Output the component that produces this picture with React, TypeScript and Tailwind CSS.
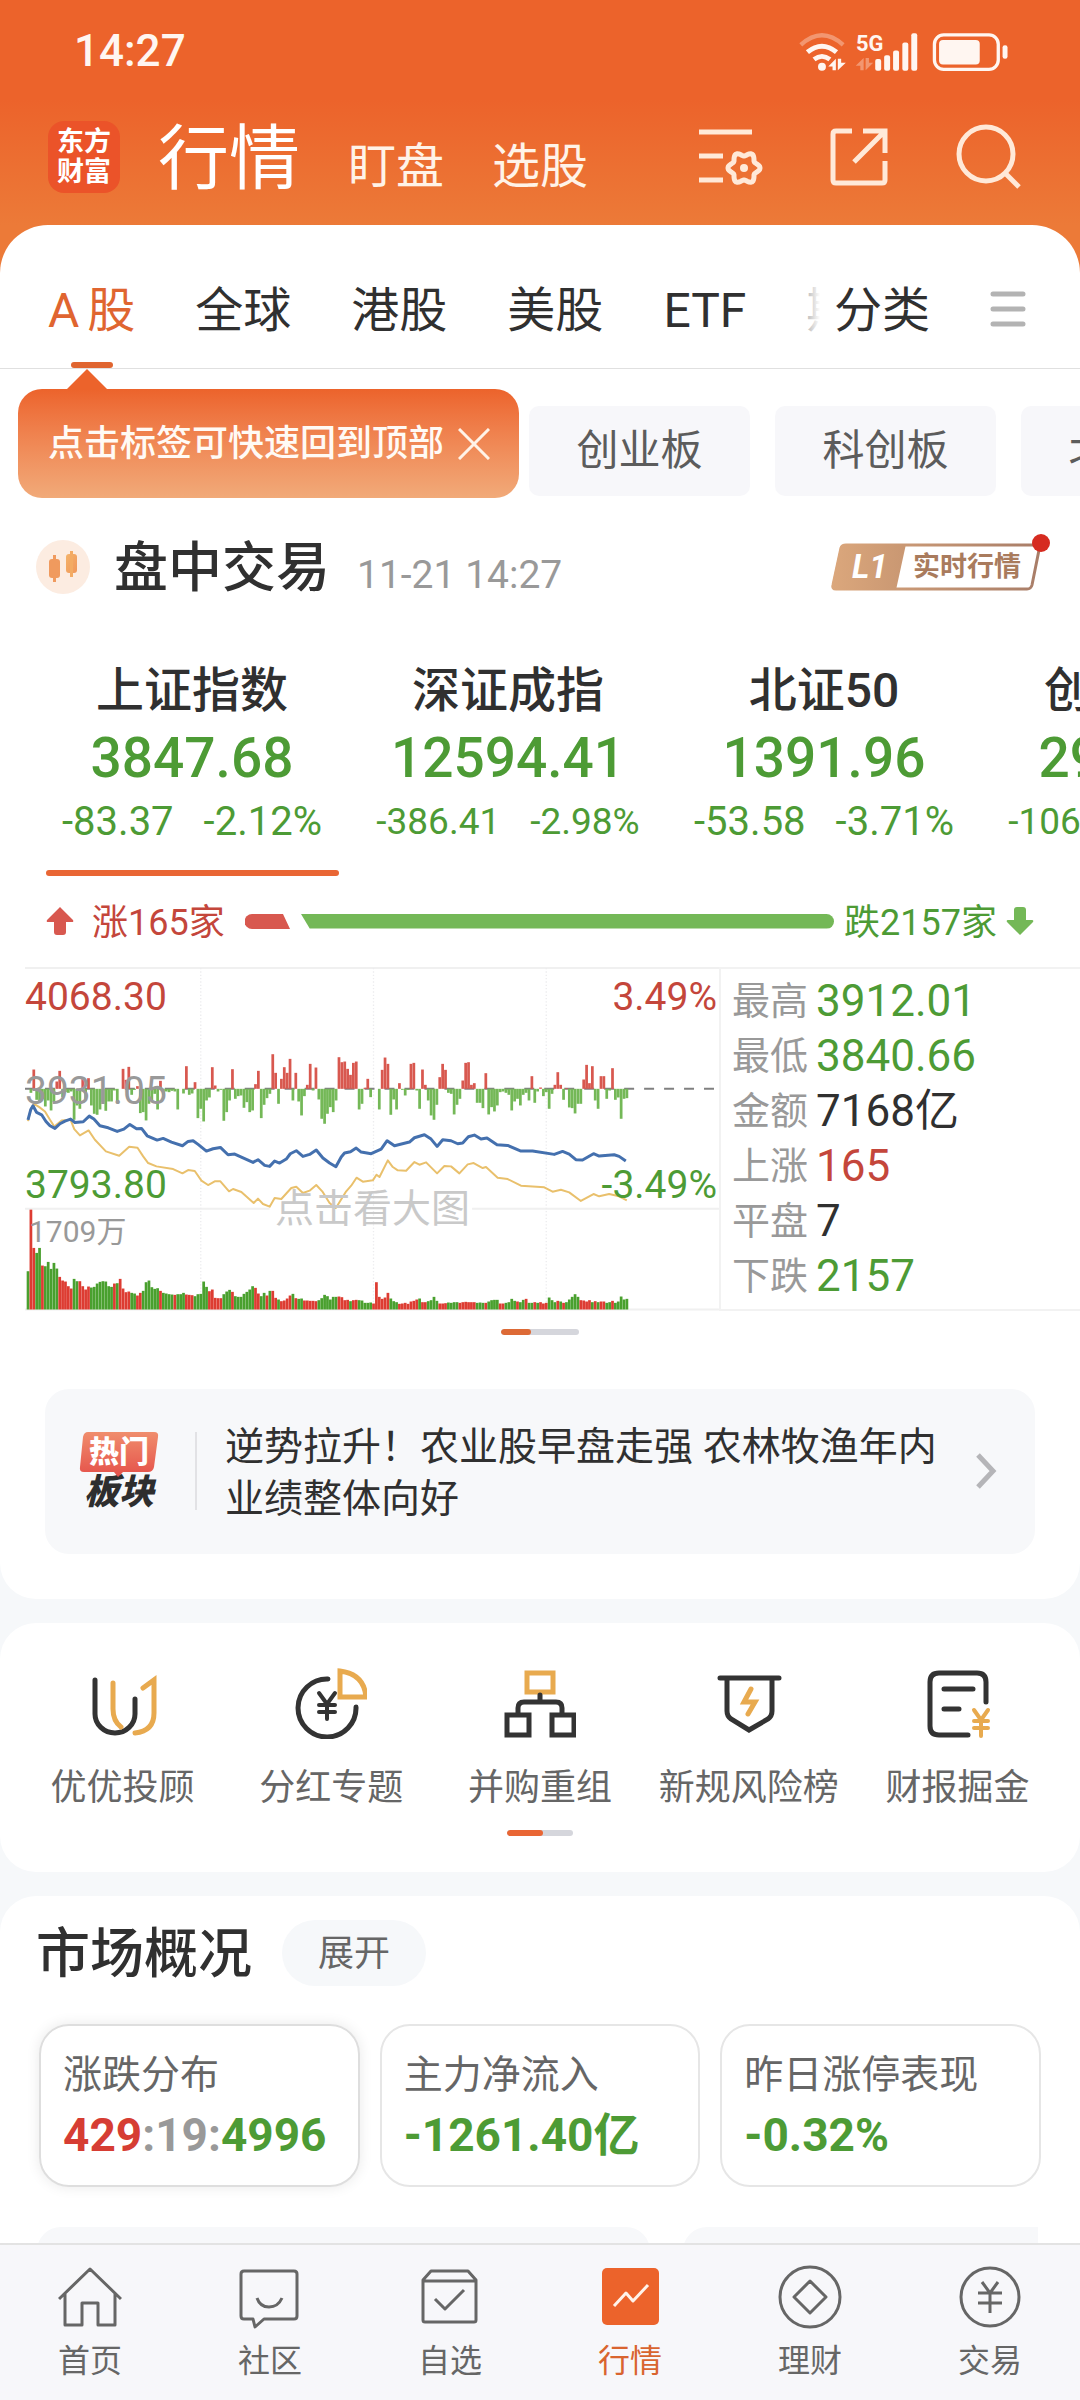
const GREEN = "#74b857";
const RED = "#d8584f";

/* One value per minute: positive draws above the base line, negative below. */
const momentum = [
  0, -12, 58, -33, -40, -30, -53, -35, -65, -40, 22, 54, -25, -10, -12, -8, -93, -50, -60, 33, -30, 32, -50, -75, -78,
  -62, -40, -66, -38, -38, -5, -37, 0, 60, 27, 66, -18, -3, 8, -73, -70, -95, -45, -35, -15, -62, 24, -18, -8, -10, -6,
  -8, -62, 0, -14, 68, -18, -14, 20, -88, -60, -98, -35, -26, 65, 10, -8, -3, -96, -70, -35, 59, -30, -22, -20, -57,
  -40, -70, -65, 14, 54, -88, -48, -28, -15, 104, 48, -45, 30, 65, 48, 90, -35, 48, -38, -80, -22, 12, 75, -5, 64, -32,
  -90, -105, -75, -55, -70, -35, 95, 80, 82, 60, 42, 78, 82, -62, -45, 3, 30, -25, 0, 0, -62, 57, 94, 75, -78, -32,
  -62, 17, -3, -20, -3, 75, 78, -5, -60, 58, 12, -35, -80, -93, -48, 35, 75, 57, -12, -15, -77, -48, -30, 25, 78, 80,
  12, 17, -42, -42, -58, 47, -77, -55, -68, -50, -10, -8, -12, -18, -65, -38, -30, -50, -18, -12, -35, 38, -42, -8, 4,
  -22, -10, -60, -15, 12, 50, 12, -33, 2, -56, -58, -74, -45, -45, 28, 72, 17, 68, -35, -60, 38, 38, -30, -5, 62, -33,
  -26, -90, -30, -28,
];

/* Volume per minute: positive is a rising minute, negative a falling one. */
const volume = [
  -115, 300, 185, -170, -185, 132, -130, -143, -122, -140, -123, 98, 87, 84, 70, 63, -92, -85, 85, 70, 60, 69, -66, -68,
  -78, -83, -85, -84, -70, -68, 78, -79, 92, 63, 52, 54, -50, -48, 42, 50, -56, -82, -87, -67, -62, -64, 56, -50, -48,
  -46, -45, 44, -46, -46, -50, 45, 44, 43, -40, -46, -47, -84, -68, 55, 60, 35, 34, 34, -46, -54, -59, 53, -40, -38,
  -38, -47, -53, -60, -70, 65, 48, -40, -50, 42, -56, 56, 35, -30, 25, 27, 33, 42, -47, 34, -32, -33, 27, 27, 26, 26,
  25, -28, -34, -44, -40, -30, -38, -38, 39, 37, 28, 29, -25, 28, 29, -28, -27, -20, -20, -21, 18, 82, 38, 32, 36, 50,
  -33, -25, -22, 17, 18, 20, 17, 24, 26, 30, -33, 22, 22, -25, -28, -38, -26, 18, 18, 19, -21, -20, -22, -22, 20, 22,
  23, 22, 22, 22, -20, -21, -20, 20, -24, -28, -29, -29, 18, 18, -20, -22, -32, -26, 24, -22, -29, 32, -20, -20, 22,
  -20, 22, 18, 20, -36, -28, -22, 26, -24, 20, -22, -30, -38, -46, -38, 28, 27, 24, 28, -22, 25, -22, 24, 24, -20, -22,
  26, -20, -24, -39, -30, -32,
];

const indexLine =
  "24,210 32,180 39,168 50,188 65,195 78,215 90,228 105,236 120,222 135,214 152,208 165,218 190,216 208,199 222,208 240,228 265,234 292,245 312,238 330,224 350,237 365,236 382,258 412,271 430,266 455,277 488,288 505,275 520,273 535,284 560,304 580,297 602,293 625,315 645,313 700,338 715,330 735,347 750,350 765,334 780,340 800,328 812,312 830,303 850,320 870,314 890,301 910,325 930,340 949,351 965,322 975,310 993,306 1010,295 1025,307 1055,312 1085,298 1103,273 1125,288 1170,277 1185,264 1215,255 1235,268 1253,290 1270,270 1295,273 1315,282 1330,280 1347,261 1365,256 1385,268 1403,265 1433,285 1465,287 1505,304 1540,304 1605,314 1630,305 1650,313 1670,330 1690,331 1723,312 1740,319 1785,315 1800,320 1820,334";

const averageLine =
  "24,214 32,180 42,162 58,172 75,185 90,210 103,230 125,212 152,210 163,238 180,257 206,242 225,270 258,305 298,318 328,291 353,294 370,320 385,340 410,350 460,358 488,371 505,361 525,364 545,393 565,406 585,395 602,395 628,425 640,418 665,427 702,460 715,447 730,463 750,471 765,445 785,448 815,415 830,411 850,430 870,423 890,406 908,425 930,460 949,475 980,425 995,408 1011,384 1030,396 1060,392 1071,375 1080,382 1105,332 1120,352 1135,362 1160,363 1185,337 1200,345 1220,338 1235,353 1253,371 1275,349 1295,350 1320,371 1345,344 1363,340 1390,355 1400,352 1435,384 1465,388 1505,408 1575,413 1600,426 1625,420 1650,428 1685,454 1723,433 1740,440 1770,433 1800,440 1823,452";

const STEP = 8.65;

function gearPath(cx: number, cy: number) {
  const points: string[] = [];
  for (let deg = 0; deg < 360; deg += 5) {
    const t = (deg * Math.PI) / 180;
    const r = 14 + 2 * Math.cos(6 * t);
    points.push(`${(cx + r * Math.cos(t)).toFixed(1)} ${(cy + r * Math.sin(t)).toFixed(1)}`);
  }
  return `M${points.join("L")}Z`;
}

function StatusIcons() {
  return (
    <svg viewBox="50 25 645 130" className="h-[43px] w-[215px]" fill="none" stroke="#fff6f1" aria-hidden="true">
      <path d="M62 70Q126 12 190 70" strokeWidth="13" opacity="0.35" />
      <path d="M82 92Q126 56 170 92" strokeWidth="15" />
      <path d="M102 114Q126 95 150 114" strokeWidth="14" />
      <g fill="#fff6f1" stroke="none">
        <circle cx="126" cy="136" r="12" />
        <path d="M168 112V147H158V135H145Z" />
        <path d="M174 147V112H184V124H198Z" />
        <g opacity="0.35">
          <path d="M252 110V147H242V133H228Z" />
          <path d="M258 147V110H268V124H281Z" />
        </g>
        <text x="229" y="90" fontSize="66" fontWeight="700">5G</text>
        <rect x="287" y="113" width="18" height="35" rx="6" />
        <rect x="314" y="101" width="18" height="47" rx="6" />
        <rect x="341" y="87" width="18" height="61" rx="6" />
        <rect x="369" y="63" width="18" height="85" rx="6" />
        <rect x="396" y="35" width="18" height="113" rx="6" />
        <rect x="480" y="55" width="123" height="74" rx="12" />
        <rect x="672" y="71" width="15" height="41" rx="7" />
      </g>
      <rect x="466" y="40" width="193" height="104" rx="28" strokeWidth="10" />
    </svg>
  );
}

function Header() {
  return (
    <header>
      <div className="flex h-[102px] items-center justify-between pr-[69px] pl-[74px]">
        <time className="text-[44px] leading-none font-medium text-[#fff6f1]">14:27</time>
        <StatusIcons />
      </div>
      <div className="mb-[13px] flex h-[110px] items-center pr-[58px] pl-[48px]">
        <div className="flex h-[72px] w-[72px] flex-col items-center justify-center rounded-[16px] bg-[#eb5329] text-[27px] leading-[30px] font-bold text-white">
          <span>东方</span>
          <span>财富</span>
        </div>
        <nav className="ml-[38px] flex items-baseline gap-[48px] pt-[12px] text-[48px] leading-[80px] text-[#fff3e8]">
          <a href="#quotes" className="text-[71px] text-white">行情</a>
          <a href="#watch">盯盘</a>
          <a href="#pick">选股</a>
        </nav>
        <div className="ml-auto flex gap-[63px]">
          <button type="button" aria-label="设置">
            <svg viewBox="0 0 66 66" className="h-[66px] w-[66px]" fill="none" stroke="#ffe9d8" strokeWidth="5">
              <path d="M1 8H54M1 32H25M1 56H25" />
              <path d={gearPath(46, 44)} strokeWidth="5" strokeLinejoin="round" />
              <circle cx="46" cy="44" r="4" fill="#ffe9d8" stroke="none" />
            </svg>
          </button>
          <button type="button" aria-label="分享">
            <svg viewBox="0 0 66 66" className="h-[66px] w-[66px]" fill="none" stroke="#ffe9d8" strokeWidth="5">
              <path d="M25 7H9Q6 7 6 10V56Q6 59 9 59H55Q58 59 58 56V37M36 7H58V29M58 7L27 38" />
            </svg>
          </button>
          <button type="button" aria-label="搜索">
            <svg viewBox="0 0 66 66" className="h-[66px] w-[66px]" fill="none" stroke="#ffe9d8" strokeWidth="5">
              <circle cx="30" cy="30" r="27" />
              <path d="M48 48L63 63" />
            </svg>
          </button>
        </div>
      </div>
    </header>
  );
}

function MarketTabs() {
  return (
    <div className="flex h-[144px] items-stretch border-b border-[#e0e0e0] pr-[54px] pl-[48px] text-[48px] leading-[60px] text-[#303030]">
      <div className="relative flex min-w-0 flex-1 gap-[60px] overflow-hidden whitespace-nowrap">
        <button type="button" className="relative flex shrink-0 items-center gap-[8px] pt-[28px] text-[#e06530]">
          <span>A</span>
          <span>股</span>
          <span className="absolute bottom-0 left-1/2 h-[6px] w-[42px] -translate-x-1/2 rounded-[3px] bg-[#e06530]" />
        </button>
        <button type="button" className="shrink-0 pt-[28px]">全球</button>
        <button type="button" className="shrink-0 pt-[28px]">港股</button>
        <button type="button" className="shrink-0 pt-[28px]">美股</button>
        <button type="button" className="shrink-0 pt-[28px]">ETF</button>
        <button type="button" className="shrink-0 pt-[28px]">期货</button>
        <span className="absolute inset-y-0 right-0 w-[40px] bg-linear-to-r from-white/0 to-white" />
      </div>
      <button type="button" className="ml-[14px] shrink-0 pt-[28px]">分类</button>
      <button type="button" aria-label="更多" className="ml-[60px] pt-[24px]">
        <svg viewBox="0 0 36 36" className="h-[36px] w-[36px]" stroke="#b3b3b3" strokeWidth="5" strokeLinecap="round">
          <path d="M3 3H33M3 18H33M3 33H33" />
        </svg>
      </button>
    </div>
  );
}

function BoardChips() {
  return (
    <div className="relative">
      <div className="flex gap-[25px] overflow-hidden pt-[37px] pl-[529px] text-[42px] leading-[90px] text-[#5c5c5c]">
        {["创业板", "科创板", "北交所"].map((name) => (
          <button key={name} type="button" className="h-[90px] w-[221px] shrink-0 rounded-[10px] bg-[#f7f7fa]">
            {name}
          </button>
        ))}
      </div>
      <div className="absolute top-[20px] left-[18px] flex h-[109px] w-[501px] items-center justify-between rounded-[24px] bg-linear-to-b from-[#ec632b] to-[#f1aa79] pr-[29px] pl-[30px] text-[36px] font-medium text-[#fffaf5]">
        <svg viewBox="0 0 42 21" className="absolute -top-[20px] left-[48px] h-[21px] w-[42px]" fill="#ec632b" aria-hidden="true">
          <path d="M21 0L42 21H0Z" />
        </svg>
        <span>点击标签可快速回到顶部</span>
        <button type="button" aria-label="关闭">
          <svg viewBox="0 0 32 32" className="h-[32px] w-[32px]" stroke="#fff3e8" strokeWidth="3">
            <path d="M1 1L31 31M31 1L1 31" />
          </svg>
        </button>
      </div>
    </div>
  );
}

function TradingState() {
  return (
    <div className="mt-[44px] flex h-[54px] items-center pr-[37px] pl-[36px]">
      <svg viewBox="0 0 54 54" className="h-[54px] w-[54px] shrink-0" aria-hidden="true">
        <defs>
          <linearGradient id="candle" x1="0" y1="0" x2="1" y2="1">
            <stop offset="0" stopColor="#f4b36a" />
            <stop offset="1" stopColor="#f0975a" />
          </linearGradient>
        </defs>
        <circle cx="27" cy="27" r="27" fill="#fcece1" />
        <rect x="13" y="19" width="11" height="19" rx="3" fill="#f09a5e" />
        <rect x="17" y="15" width="3" height="27" fill="#f09a5e" />
        <rect x="30" y="14" width="11" height="19" rx="3" fill="url(#candle)" />
        <rect x="34" y="11" width="3" height="26" fill="#f3ab63" />
      </svg>
      <h2 className="ml-[24px] pt-[4px] text-[54px] leading-[60px] font-medium text-[#303030]">盘中交易</h2>
      <time className="ml-[27px] pt-[16px] text-[39px] leading-[46px] text-[#999]">11-21 14:27</time>
      <button type="button" className="relative ml-auto h-[48px] w-[212px]">
        <svg viewBox="0 0 212 48" className="absolute inset-0 h-full w-full" aria-hidden="true">
          <defs>
            <linearGradient id="tan" x1="0" y1="0" x2="1" y2="0">
              <stop offset="0" stopColor="#dba77c" />
              <stop offset="1" stopColor="#c99772" />
            </linearGradient>
            <linearGradient id="rim" x1="0" y1="0" x2="1" y2="0">
              <stop offset="0" stopColor="#dba77c" />
              <stop offset="1" stopColor="#a87d68" />
            </linearGradient>
          </defs>
          <path d="M15 2H209L201 42Q200 46 196 46H5Q1 46 2 42L10 5Q11 2 15 2Z" fill="#fff" stroke="url(#rim)" strokeWidth="3" />
          <path d="M15 1H75L65 47H5Q0 47 1 42L9 5Q10 1 15 1Z" fill="url(#tan)" />
        </svg>
        <span className="relative flex h-full items-center pl-[21px] whitespace-nowrap">
          <b className="text-[33px] italic text-white">L1</b>
          <span className="absolute left-[82px] text-[27px] font-bold text-[#a97b5d]">实时行情</span>
        </span>
        <span className="absolute -top-[9px] right-[-7px] h-[18px] w-[18px] rounded-full bg-[#d62b20]" />
      </button>
    </div>
  );
}

const indices = [
  { name: "上证指数", value: "3847.68", diff: "-83.37", pct: "-2.12%", small: false },
  { name: "深证成指", value: "12594.41", diff: "-386.41", pct: "-2.98%", small: true },
  { name: "北证50", value: "1391.96", diff: "-53.58", pct: "-3.71%", small: false },
  { name: "创业板指", value: "2920.08", diff: "-106.23", pct: "-3.51%", small: true },
];

function IndexStrip() {
  return (
    <div className="mt-[67px] flex overflow-hidden pl-[34px]">
      {indices.map((item, i) => (
        <button key={item.name} type="button" className="flex w-[316px] shrink-0 flex-col items-center text-[#4d9b35]">
          <span className="text-[48px] leading-[60px] font-medium text-[#303030]">{item.name}</span>
          <span className="text-[55px] leading-[74px] font-medium">{item.value}</span>
          <span
            className={
              item.small
                ? "flex gap-[30px] text-[37px] leading-[54px]"
                : "flex gap-[30px] text-[40px] leading-[54px]"
            }
          >
            <span>{item.diff}</span>
            <span>{item.pct}</span>
          </span>
          {i === 0 && <span className="mt-[21px] h-[6px] w-[293px] rounded-[3px] bg-[#e96634]" />}
        </button>
      ))}
    </div>
  );
}

function Breadth() {
  return (
    <div className="mt-[21px] flex h-[48px] items-center pr-[46px] pl-[46px] text-[36px] whitespace-nowrap">
      <svg viewBox="0 0 28 28" className="h-[28px] w-[28px] shrink-0" fill={RED} aria-hidden="true">
        <path d="M14 0L27 13Q28 15 26 15H20V25Q20 28 17 28H11Q8 28 8 25V15H2Q0 15 1 13Z" />
      </svg>
      <span className="ml-[18px] pt-[3px] text-[#c4463b]">涨165家</span>
      <svg viewBox="0 0 56 15" className="ml-[20px] h-[15px] w-[56px] shrink-0" aria-hidden="true">
        <path d="M7 0H38L45 15H7A7 7 0 0 1 7 0Z" fill={RED} />
      </svg>
      <span className="h-[15px] flex-1 rounded-r-full bg-[#74b857] [clip-path:polygon(0_0,100%_0,100%_100%,9px_100%)]" />
      <span className="ml-[10px] pt-[3px] text-[#4d9b35]">跌2157家</span>
      <svg viewBox="0 0 28 28" className="ml-[9px] h-[28px] w-[28px] shrink-0" fill={GREEN} aria-hidden="true">
        <path d="M14 28L27 15Q28 13 26 13H20V3Q20 0 17 0H11Q8 0 8 3V13H2Q0 13 1 15Z" />
      </svg>
    </div>
  );
}

function MinuteChart() {
  return (
    <svg viewBox="15 -249 2085 1032" className="block h-auto w-full" fill="none" role="img" aria-label="分时走势">
      <path d="M15 -246H2100M15 780H2100M15 477H750M1358 477H2100" stroke="#f0f0f0" strokeWidth="6" />
      <path d="M543 -246V780M1062 -246V780M1581 -246V780" stroke="#ececee" strokeWidth="4" strokeDasharray="4 6" />
      <path d="M15 117H2100" stroke="#808080" strokeWidth="6" strokeDasharray="30 30" />
      {momentum.map((v, i) => (
        <rect
          key={i}
          x={20 + STEP * i}
          y={v > 0 ? 117 - v : 117}
          width="8.2"
          height={Math.abs(v)}
          fill={v > 0 ? RED : GREEN}
        />
      ))}
      {volume.map((v, i) => (
        <rect
          key={i}
          x={20 + STEP * i}
          y={780 - Math.abs(v)}
          width="8.2"
          height={Math.abs(v)}
          fill={v > 0 ? "#dd3c32" : "#49a02e"}
        />
      ))}
      <polyline points={averageLine} stroke="#e9c06c" strokeWidth="6" strokeLinejoin="round" />
      <polyline points={indexLine} stroke="#4470ae" strokeWidth="9" strokeLinejoin="round" />
    </svg>
  );
}

const stats = [
  ["最高", "3912.01", "text-[#4d9b35]"],
  ["最低", "3840.66", "text-[#4d9b35]"],
  ["金额", "7168亿", "text-[#303030]"],
  ["上涨", "165", "text-[#c4463b]"],
  ["平盘", "7", "text-[#303030]"],
  ["下跌", "2157", "text-[#4d9b35]"],
];

function ChartPanel() {
  return (
    <>
      <div className="mt-[22px] flex pl-[25px]">
        <div className="relative flex-1 text-[39px] leading-[48px]">
          <MinuteChart />
          <span className="absolute top-[6px] left-0 text-[#c4463b]">4068.30</span>
          <span className="absolute top-[6px] right-[2px] text-[#c4463b]">3.49%</span>
          <span className="absolute top-[100px] left-0 text-[#999]">3931.05</span>
          <span className="absolute top-[194px] left-0 text-[#4d9b35]">3793.80</span>
          <span className="absolute top-[194px] right-[2px] text-[#4d9b35]">-3.49%</span>
          <span className="absolute top-[241px] left-[4px] text-[30px] text-[#999]">1709万</span>
          <span className="absolute top-[218px] left-[250px] text-[39px] text-[#c9c9c9]">点击看大图</span>
        </div>
        <dl className="w-[361px] border-y-2 border-l-2 border-[#f2f2f2] pt-[5px] pl-[11px] leading-[55px]">
          {stats.map(([label, value, tone]) => (
            <div key={label} className="flex items-center gap-[8px]">
              <dt className="text-[38px] text-[#999]">{label}</dt>
              <dd className={`text-[44px] ${tone}`}>{value}</dd>
            </div>
          ))}
        </dl>
      </div>
      <div className="mx-auto mt-[18px] h-[6px] w-[78px] overflow-hidden rounded-[3px] bg-[#d5d6dc]">
        <div className="h-full w-[30px] rounded-[3px] bg-[#dd6a36]" />
      </div>
    </>
  );
}

function HotSector() {
  return (
    <a href="#hot" className="mx-[45px] mt-[54px] flex h-[165px] items-center rounded-[24px] bg-[#f7f8fa] pr-[38px] pl-[34px]">
      <span className="relative flex w-[80px] flex-col items-center leading-none font-black">
        <svg viewBox="0 0 80 46" className="absolute top-0 left-0 h-[46px] w-[80px]" aria-hidden="true">
          <defs>
            <linearGradient id="hot" x1="0" y1="0" x2="0" y2="1">
              <stop offset="0" stopColor="#f08d6c" />
              <stop offset="1" stopColor="#e5514a" />
            </linearGradient>
          </defs>
          <path d="M9 0H75Q80 0 79 5L75 35Q74 40 69 40H44L39 45L35 40H5Q0 40 1 35L4 5Q5 0 9 0Z" fill="url(#hot)" />
        </svg>
        <span className="relative text-[30px] leading-[40px] text-white">热门</span>
        <span className="pt-[3px] text-[35px] leading-[36px] text-[#2e2e2e] italic">板块</span>
      </span>
      <span className="ml-[36px] h-[78px] w-[2px] bg-[#e2e2e5]" />
      <span className="ml-[28px] flex-1 pt-[3px] text-[39px] leading-[52px] text-[#303030]">
        逆势拉升！农业股早盘走强 农林牧渔年内业绩整体向好
      </span>
      <svg viewBox="0 0 22 36" className="ml-[30px] h-[36px] w-[22px] shrink-0" fill="none" stroke="#b5b5b8" strokeWidth="5" aria-hidden="true">
        <path d="M3 2L18 18L3 34" />
      </svg>
    </a>
  );
}

const AMBER = "#e8aa4f";

const shortcuts = [
  {
    label: "优优投顾",
    icon: (
      <>
        <path d="M9 13V47A20 19 0 0 0 49 47V32" />
        <path d="M27 16V42Q27 54 35 60M57 21L68 13V46Q68 64 49 66" stroke={AMBER} />
      </>
    ),
  },
  {
    label: "分红专题",
    icon: (
      <>
        <path d="M33 12A29 29 0 1 0 61 40" />
        <path d="M24 26L32 37L40 26M32 37V52M24 38H40M24 45H40" strokeWidth="4" />
        <path d="M45 4V30H71Q69 7 45 4Z" stroke={AMBER} />
      </>
    ),
  },
  {
    label: "并购重组",
    icon: (
      <>
        <path d="M23 6H49V25H23Z" stroke={AMBER} />
        <path d="M36 28V35M14 46V41Q14 35 20 35H52Q58 35 58 41V46M3 48H25V68H3ZM48 48H70V68H48Z" />
      </>
    ),
  },
  {
    label: "新规风险榜",
    icon: (
      <>
        <path d="M7 11H66M14 12V44Q14 49 18 52L36 63L55 52Q59 49 59 44V12" />
        <path d="M38 22L31 35H42L35 47" stroke={AMBER} />
      </>
    ),
  },
  {
    label: "财报掘金",
    icon: (
      <>
        <path d="M64 35V15Q64 6 55 6H17Q8 6 8 15V59Q8 68 17 68H46M22 22H51M22 42H37" />
        <path d="M52 43L59 53L66 43M59 53V69M52 54H66M52 61H66" stroke={AMBER} strokeWidth="4" />
      </>
    ),
  },
];

function Shortcuts() {
  return (
    <section className="mt-[24px] rounded-[36px] bg-white pt-[44px] pb-[36px]">
      <div className="grid grid-cols-5 px-[18px]">
        {shortcuts.map((s) => (
          <a key={s.label} href={`#${s.label}`} className="flex flex-col items-center">
            <svg viewBox="0 0 72 72" className="h-[72px] w-[72px]" fill="none" stroke="#333" strokeWidth="5" strokeLinecap="round" aria-hidden="true">
              {s.icon}
            </svg>
            <span className="mt-[25px] text-[36px] leading-[48px] whitespace-nowrap text-[#666]">{s.label}</span>
          </a>
        ))}
      </div>
      <div className="mx-auto mt-[18px] h-[6px] w-[66px] overflow-hidden rounded-[3px] bg-[#d5d6dc]">
        <div className="h-full w-[36px] rounded-[3px] bg-[#e96634]" />
      </div>
    </section>
  );
}

function MarketOverview() {
  return (
    <section className="mt-[24px] rounded-t-[36px] bg-white pt-[24px]">
      <div className="flex h-[66px] items-center gap-[30px] pl-[36px]">
        <h2 className="pt-[5px] text-[54px] leading-[66px] font-medium text-[#303030]">市场概况</h2>
        <button type="button" className="h-[66px] rounded-full bg-[#f6f8fa] px-[36px] pt-[3px] text-[36px] text-[#666]">展开</button>
      </div>
      <div className="mt-[38px] grid grid-cols-3 gap-[20px] px-[39px] text-[39px] leading-[60px] text-[#666]">
        <button type="button" className="h-[163px] rounded-[30px] border-2 border-[#dedede] pl-[22px] text-left shadow-[0_0_14px_rgba(0,0,0,0.09)]">
          <span className="block">涨跌分布</span>
          <b className="block text-[46px]">
            <span className="text-[#d63d33]">429</span>
            <span className="text-[#999]">:19:</span>
            <span className="text-[#4d9b35]">4996</span>
          </b>
        </button>
        <button type="button" className="h-[163px] rounded-[30px] border-2 border-[#e6e6e6] pl-[22px] text-left">
          <span className="block">主力净流入</span>
          <b className="block text-[46px] text-[#4d9b35]">-1261.40亿</b>
        </button>
        <button type="button" className="h-[163px] rounded-[30px] border-2 border-[#e6e6e6] pl-[22px] text-left">
          <span className="block">昨日涨停表现</span>
          <b className="block text-[46px] text-[#4d9b35]">-0.32%</b>
        </button>
      </div>
      <div className="mt-[40px] mr-[42px] ml-[37px] flex gap-[33px] overflow-hidden">
        <div className="h-[200px] w-[613px] shrink-0 rounded-[24px] bg-[#f7f8fa]" />
        <div className="h-[200px] w-[613px] shrink-0 rounded-[24px] bg-[#f7f8fa]" />
      </div>
    </section>
  );
}

const navItems = [
  { label: "首页", icon: <path d="M1 34L32 4L63 34M7 29V60H24V38H40V60H57V29" /> },
  {
    label: "社区",
    icon: <path d="M6 6H56Q59 6 59 9V51Q59 54 56 54H26L17 62L15 54H6Q3 54 3 51V9Q3 6 6 6ZM19 33Q22 42 31 42T44 33" />,
  },
  {
    label: "自选",
    icon: <path d="M5 15L13 6H50L58 15V55Q58 57 56 57H7Q5 57 5 55ZM5 16H58M17 34L27 44L46 25" />,
  },
  {
    label: "行情",
    active: true,
    icon: (
      <>
        <rect x="4" y="3" width="57" height="57" rx="5" fill="#ec632b" stroke="none" />
        <path d="M16 41L28 28L35 36L50 20" stroke="#fff3ea" />
      </>
    ),
  },
  {
    label: "理财",
    icon: (
      <>
        <circle cx="32" cy="32" r="30" />
        <path d="M32 16L48 32L32 48L16 32Z" />
      </>
    ),
  },
  {
    label: "交易",
    icon: (
      <>
        <circle cx="32" cy="32" r="29" />
        <path d="M24 17L32 28L40 17M32 28V48M20 28H44M20 38H44" />
      </>
    ),
  },
];

function BottomNav() {
  return (
    <nav className="grid h-[157px] shrink-0 grid-cols-6 border-t-2 border-[#e3e3e3] bg-[#f7f7fa] pt-[20px]">
      {navItems.map((item) => (
        <a
          key={item.label}
          href={`#${item.label}`}
          aria-current={item.active ? "page" : undefined}
          className={item.active ? "flex flex-col items-center text-[#d9642f]" : "flex flex-col items-center text-[#666]"}
        >
          <svg viewBox="0 0 64 64" className="h-[64px] w-[64px]" fill="none" stroke="currentColor" strokeWidth="3" strokeLinejoin="round" aria-hidden="true">
            {item.icon}
          </svg>
          <span className="mt-[12px] text-[32px] leading-[40px]">{item.label}</span>
        </a>
      ))}
    </nav>
  );
}

export default function App() {
  return (
    <div className="flex h-screen flex-col bg-[#f6f8fa] font-['Roboto','Noto_Sans_CJK_SC',sans-serif]">
      <main className="min-h-0 flex-1 overflow-x-hidden overflow-y-auto [scrollbar-width:none]">
        <div className="bg-[linear-gradient(180deg,#ec632b_100px,#ec7a38_225px,#ec7a38_400px,#f6f8fa_400px)]">
          <Header />
          <section className="rounded-t-[48px] rounded-b-[36px] bg-white pb-[45px]">
            <MarketTabs />
            <BoardChips />
            <TradingState />
            <IndexStrip />
            <Breadth />
            <ChartPanel />
            <HotSector />
          </section>
        </div>
        <Shortcuts />
        <MarketOverview />
      </main>
      <BottomNav />
    </div>
  );
}
